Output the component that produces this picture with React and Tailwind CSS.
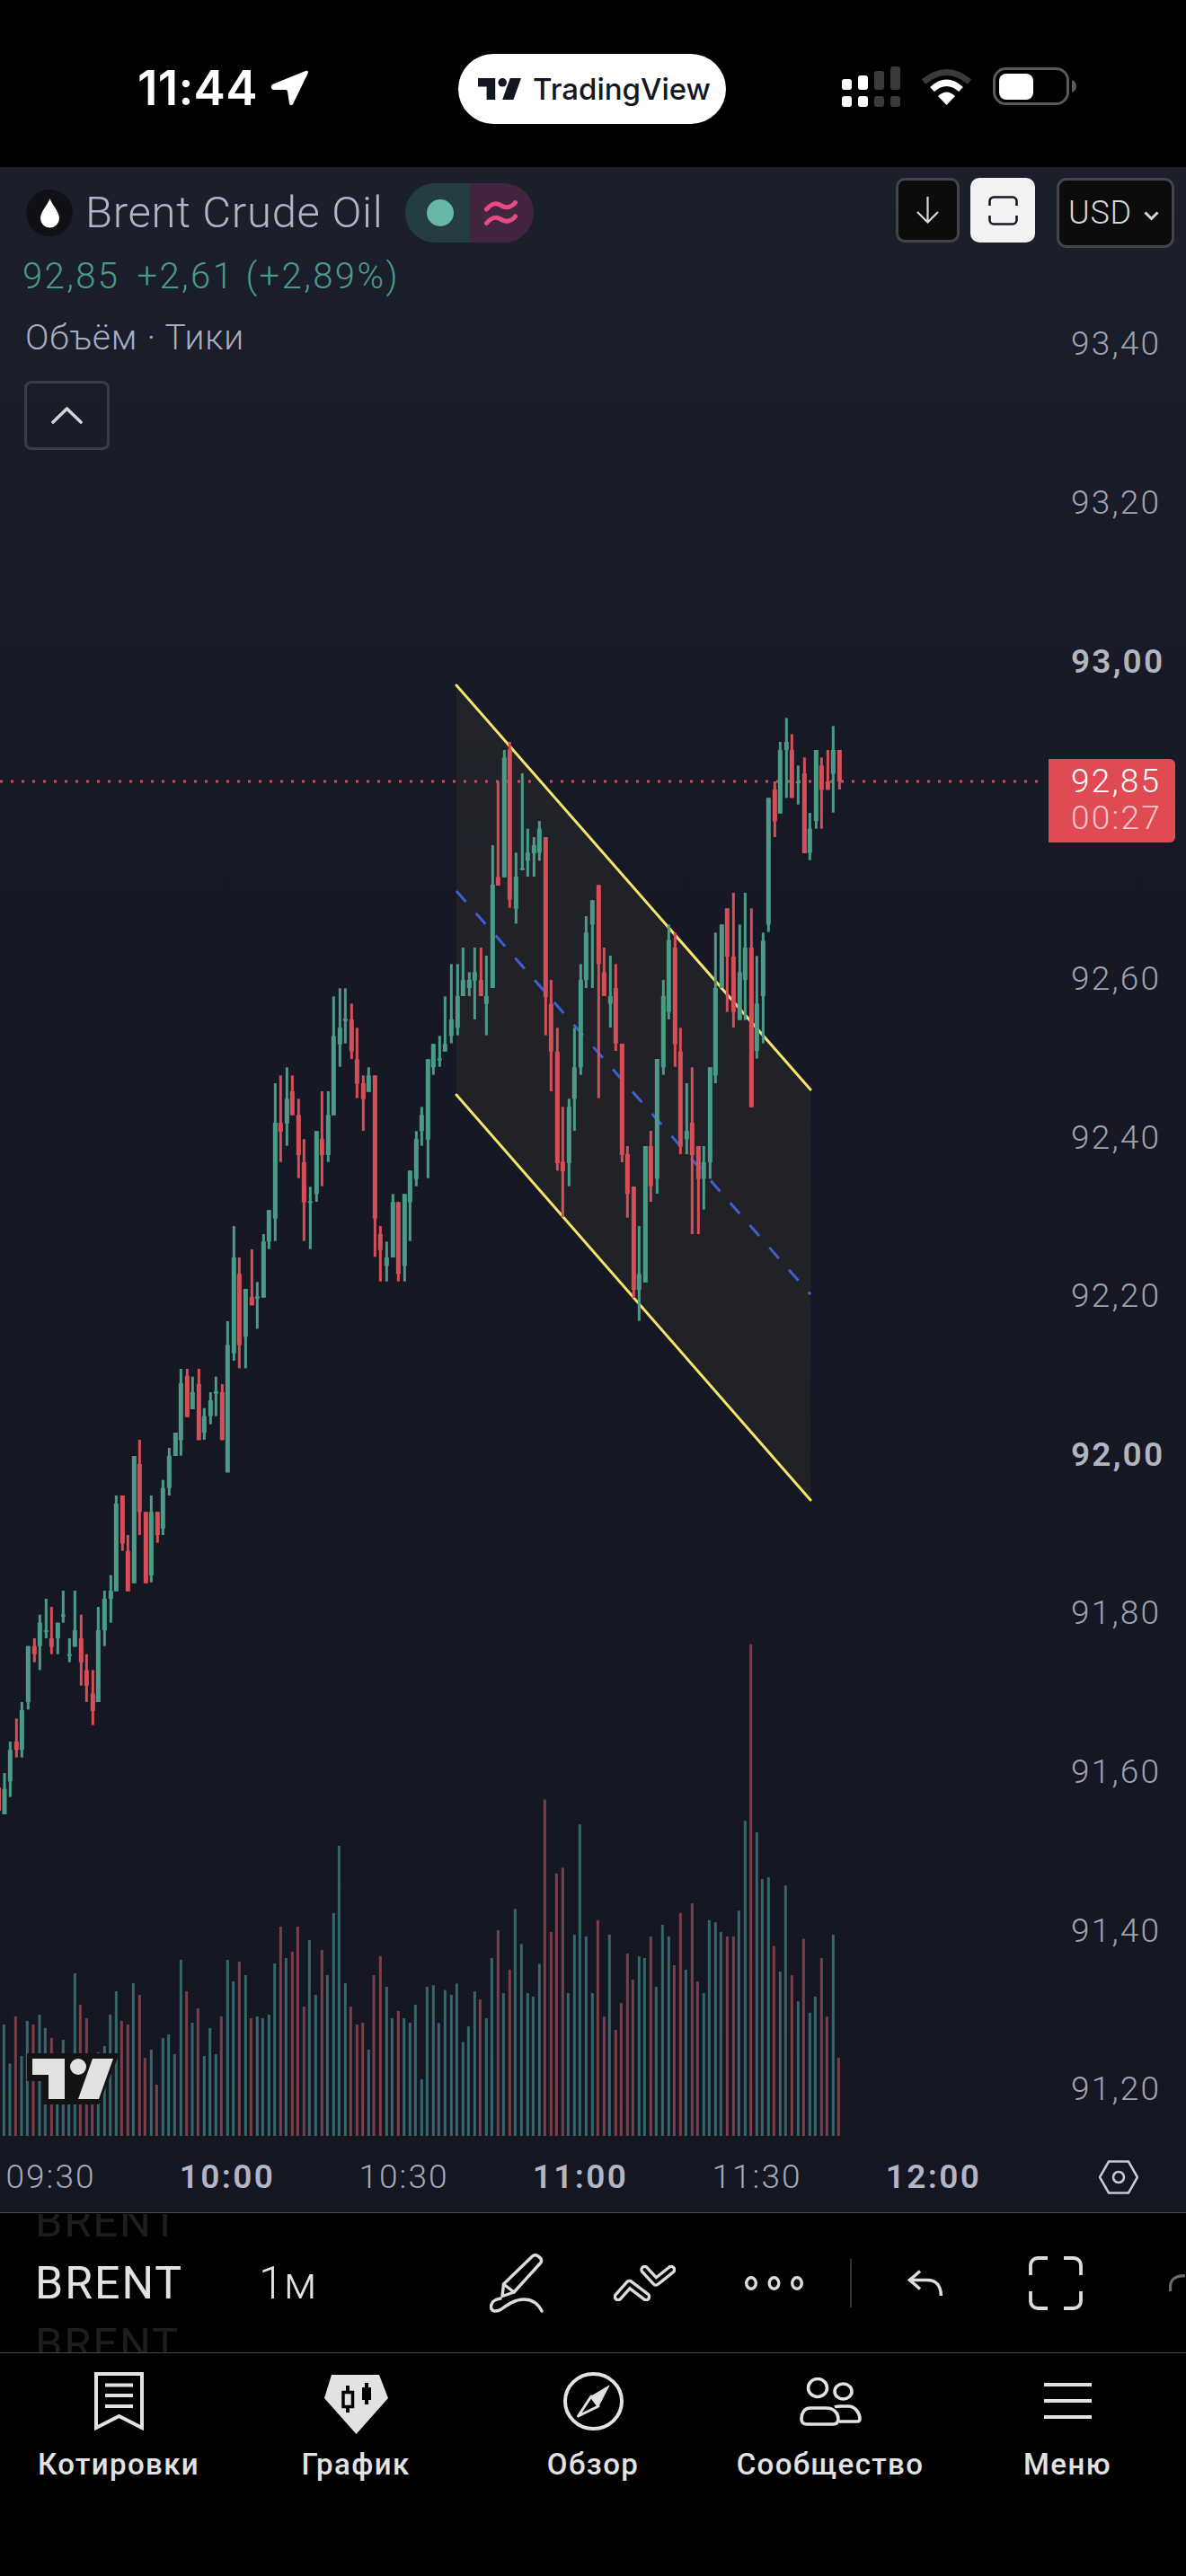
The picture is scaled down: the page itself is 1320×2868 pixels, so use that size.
const G = "#4b9b88";
const R = "#d64e57";
const VG = "#36676a";
const VR = "#7b3f49";

// [u, colour, wickTop, bodyTop, bodyBottom, wickBottom], zoomed reference coordinates
const segA = [
  [15,G,1332,1385,1470,1470],[34,G,1227,1255,1360,1412],[55,R,1150,1227,1255,1280],[73,G,1095,1122,1255,1280],
  [94,G,908,908,1095,1120],[115,R,882,908,935,962],[133,G,803,830,908,988],[154,G,750,855,860,882],
  [172,R,777,882,910,935],[193,G,830,830,882,935],[211,G,723,803,808,830],[232,G,882,935,940,962],
  [250,G,723,855,910,910],[271,R,803,882,962,1040],[289,R,935,988,1040,1095],[310,R,988,1067,1125,1172],
  [328,G,777,855,1095,1095],[349,G,723,750,855,908],[370,G,671,723,750,830],[388,G,405,432,725,725],
  [409,R,405,405,565,590],[427,R,537,590,725,725],[448,G,273,273,698,698],[466,R,219,300,460,537],
  [487,R,460,460,698,698],[505,G,405,460,672,695],[526,R,460,460,537,563],[544,G,353,380,515,537],
  [565,G,246,273,380,405],[586,G,195,195,273,273],[604,G,-18,30,220,272],[625,R,-18,5,143,143],
  [643,G,8,60,117,117],[664,R,-18,33,220,220],[682,G,113,140,195,219],[703,G,60,87,140,167],
  [721,G,8,57,65,140],[742,R,33,60,220,220],[760,G,-177,-98,328,328],
];
const segB = [
  [781,G,945,1050,1370,1395],[799,R,1050,1105,1343,1420],[820,G,1155,1155,1315,1420],[841,R,1023,1183,1210,1210],
  [859,G,1132,1180,1187,1288],[880,G,972,997,1184,1184],[898,G,892,892,997,1022],[919,G,468,600,920,995],
  [937,R,442,600,630,731],[958,G,415,520,603,677],[976,R,442,495,575,575],[997,R,520,574,708,785],
  [1015,R,655,732,866,995],[1036,G,814,862,868,1022],[1057,G,628,628,838,864],[1075,R,495,655,708,812],
  [1096,G,495,574,708,731],[1114,G,178,310,575,575],[1135,G,151,283,338,413],[1153,G,151,252,260,335],
  [1174,R,202,255,362,387],[1192,R,283,388,470,518],[1213,R,442,468,521,627],[1231,G,415,442,497,497],
  [1252,R,442,442,920,1048],[1270,R,945,972,1025,1130],[1291,G,997,1050,1078,1130],[1312,G,838,865,1050,1050],
  [1330,R,865,865,1105,1130],[1351,G,838,838,1078,1130],[1369,G,760,760,865,995],[1390,G,628,655,788,812],
  [1408,G,547,574,628,677],[1429,G,388,388,656,785],[1447,G,337,337,415,440],[1468,G,310,385,392,413],
  [1486,G,178,337,362,362],
];
const segC = [
  [67,G,1000,1185,1240,1265],[88,G,1000,1107,1213,1238],[106,G,945,1053,1107,1107],[127,G,1027,1053,1080,1107],
  [145,G,945,1027,1055,1185],[166,R,945,1053,1107,1107],[184,G,972,1107,1133,1238],[205,G,603,735,1080,1080],
  [223,R,390,710,738,738],[244,G,285,310,710,710],[262,R,258,283,785,812],[283,G,628,708,815,865],
  [304,G,363,680,686,686],[322,G,548,628,655,708],[343,G,576,603,630,708],[361,G,522,548,628,655],
  [382,R,576,576,1110,1238],[400,R,1053,1133,1292,1425],[421,R,1213,1292,1665,1690],[439,R,1477,1660,1692,1845],
  [460,G,1450,1477,1665,1742],[478,G,1213,1345,1450,1557],[499,G,1000,1053,1345,1370],[517,G,840,895,1053,1080],
  [538,G,787,787,868,1080],[559,R,736,736,1000,1448],[577,R,945,1027,1107,1107],[598,G,972,1107,1133,1212],
  [616,R,1000,1080,1265,1290],[637,R,1266,1266,1638,1662],[655,R,1608,1635,1768,1847],[676,R,1743,1743,2088,2115],
  [694,G,1875,2035,2088,2192],[715,G,1608,1608,2063,2063],[733,R,1557,1608,1742,1794],[754,G,1317,1317,1717,1767],
  [775,G,1053,1107,1345,1370],[793,G,868,920,1160,1185],[814,R,895,945,1268,1343],[832,R,1213,1292,1610,1635],
  [853,G,1398,1557,1585,1635],[871,R,1345,1530,1638,1902],[892,R,1608,1608,1718,1902],[910,G,1608,1662,1717,1820],
  [931,G,1345,1345,1662,1717],[949,G,895,1080,1372,1398],[970,G,868,868,1080,1080],[988,R,814,814,975,1160],
  [1009,R,762,975,1160,1212],[1030,G,868,1027,1187,1187],[1048,G,762,945,1053,1187],[1069,R,814,945,1478,1478],
  [1087,G,973,1132,1290,1316],[1108,G,895,922,1107,1265],[1126,G,445,445,868,893],[1147,R,390,417,523,576],
  [1165,G,258,285,497,497],[1186,G,178,258,285,445],[1204,R,232,285,445,445],[1225,G,337,390,395,467],
  [1246,R,310,363,630,630],[1264,G,495,548,628,653],[1285,G,285,285,522,548],[1303,R,310,337,418,548],
  [1324,R,285,390,418,418],[1342,G,205,285,365,494],[1363,R,285,285,390,417],
];
const mk = (seg, x0, y0) =>
  seg.map(([u, c, a, b, d, e]) => ({ x: x0 + u / 3, c, wt: y0 + a / 3, bt: y0 + b / 3, bb: y0 + d / 3, wb: y0 + e / 3 }));
const candles = [
  { x: -1.5, c: R, wt: 1966, bt: 1990, bb: 2016, wb: 2028 },
  ...mk(segA, 0, 1530),
  ...mk(segB, 0, 1050),
  ...mk(segC, 480, 740),
];

const vol1 = [
  [13,762,0],[33,892,0],[52,735,1],[72,867,0],[91,750,0],[111,762,1],[132,729,0],[151,774,0],[172,807,1],[191,867,0],
  [211,813,0],[230,900,0],[250,591,0],[268,696,1],[289,741,1],[308,860,1],[328,855,0],[349,834,0],[368,729,0],[388,651,0],
  [406,750,1],[427,762,1],[445,624,0],[466,663,1],[484,873,1],[505,846,0],[523,963,1],[544,807,0],[563,795,0],[583,861,0],
  [604,546,0],[623,651,1],[642,756,0],[661,708,1],[682,867,0],[701,774,0],[721,861,0],[739,735,1],[760,546,0],[779,618,0],
  [799,552,1],[820,597,0],[838,741,1],[859,735,0],[877,741,0],[898,729,0],[917,558,0],[937,435,1],[955,540,0],[976,519,1],
  [994,435,1],[1015,702,1],[1033,480,0],[1054,663,0],[1075,513,1],[1093,597,0],[1114,390,0],[1132,165,0],[1153,624,0],[1171,702,1],
  [1192,762,1],[1211,756,1],[1231,846,0],[1248,597,1],[1270,534,1],[1291,636,0],[1309,741,0],[1330,717,1],[1349,741,0],[1369,756,0],
  [1387,696,0],[1408,945,0],[1426,636,0],
];
const vol2 = [
  [7,1072,0],[25,1182,0],[46,1086,0],[67,1100,0],[85,1067,0],[106,1237,0],[124,1192,0],[145,1090,0],[163,1113,1],[184,1168,0],
  [202,993,0],[223,912,1],[241,1095,0],[262,1027,1],[280,850,0],[301,952,0],[322,1095,0],[340,1105,0],[361,1010,0],[379,532,1],
  [400,917,1],[418,747,1],[439,730,1],[457,1095,0],[478,925,0],[496,604,0],[517,930,0],[538,1095,0],[556,883,1],[577,1163,1],
  [595,925,0],[616,1202,1],[634,1124,1],[655,980,1],[673,1056,1],[694,988,0],[712,993,0],[733,930,1],[751,1077,0],[772,896,0],
  [793,930,0],[811,1014,1],[832,862,1],[850,1027,0],[871,834,1],[889,1061,1],[910,1095,0],[928,883,0],[949,889,0],[967,917,0],
  [988,930,1],[1009,930,1],[1027,855,0],[1048,594,0],[1067,80,1],[1087,627,0],[1105,763,0],[1126,758,0],[1144,958,1],[1165,1032,0],
  [1183,782,0],[1204,1043,1],[1225,1119,0],[1243,937,1],[1264,1152,0],[1282,1105,0],[1303,993,1],[1321,1163,1],[1342,925,0],[1360,1283,1],
];
const volumes = [
  ...vol1.map(([u, v, r]) => ({ x: u / 3, y: 2000 + v / 3, r })),
  ...vol2.map(([u, v, r]) => ({ x: 480 + u / 3, y: 1800 + v / 2.613, r })),
];

const prices = [
  ["93,40", false],["93,20", false],["93,00", true],["", false],["92,60", false],["92,40", false],
  ["92,20", false],["92,00", true],["91,80", false],["91,60", false],["91,40", false],["91,20", false],
];
const times = [["09:30", false],["10:00", true],["10:30", false],["11:00", true],["11:30", false],["12:00", true]];

function TvLogo({ className, fill }) {
  return (
    <svg viewBox="0 0 90 45" className={className} fill={fill}>
      <path d="M0 0H36V45H18V18H0Z" />
      <circle cx="51" cy="9" r="9" />
      <path d="M90 0L74 45H51L67 0Z" />
    </svg>
  );
}

function Chart() {
  return (
    <svg viewBox="0 186 1320 2198" className="absolute inset-0 w-[1320px] h-[2198px]">
      <polygon points="508,763 902,1213 902,1670 508,1219" fill="rgba(245,230,100,0.048)" />
      <line x1="0" y1="870" x2="1158" y2="870" stroke="#c8505a" strokeWidth="3" strokeDasharray="3 9" />
      <line x1="508" y1="763" x2="902" y2="1213" stroke="#f4e56a" strokeWidth="3" strokeLinecap="round" />
      <line x1="508" y1="1219" x2="902" y2="1670" stroke="#f4e56a" strokeWidth="3" strokeLinecap="round" />
      <line x1="508" y1="992" x2="902" y2="1441" stroke="#3f5fd2" strokeWidth="3" strokeDasharray="16 17" />
      {volumes.map((v, i) => (
        <rect key={i} x={v.x - 1.5} y={v.y} width="3" height={2378 - v.y} fill={v.r ? VR : VG} />
      ))}
      {candles.map((c, i) => (
        <g key={i} fill={c.c}>
          <rect x={c.x - 1.5} y={c.wt} width="3" height={c.wb - c.wt} />
          <rect x={c.x - 2.5} y={c.bt} width="5" height={Math.max(c.bb - c.bt, 2)} />
        </g>
      ))}
      <path d="M30 2286H133L110 2343H48V2317H30Z" fill="#131313" />
      <g fill="#e2e2e2">
        <path d="M36 2292H72V2337H54V2310H36Z" />
        <circle cx="87" cy="2301" r="9" />
        <path d="M126 2292L110 2337H87L103 2292Z" />
      </g>
    </svg>
  );
}

function StatusBar() {
  return (
    <div className="h-[186px] bg-black flex items-start shrink-0">
      <span className="ml-[153px] mt-[67px] w-[136px] text-[53px] leading-[62px] font-semibold text-white font-[Inter,sans-serif] tracking-[0.3px]">
        11:44
      </span>
      <svg viewBox="0 0 42 40" className="ml-[12px] mt-[78px] w-[42px] h-[40px]" fill="#fff">
        <path d="M2 16L39 1Q43 0 41.500 4L25 38Q22 41 21 37L19 24Q19 22 17 22L3 22Q-1 20 2 16Z" />
      </svg>
      <div className="ml-[167px] mt-[60px] w-[298px] h-[78px] rounded-full bg-white flex items-center">
        <TvLogo className="ml-[22px] w-[48px] h-[24px]" fill="#131722" />
        <span className="ml-[13px] text-[33px] leading-[44px] font-medium text-[#131722] font-[Inter,sans-serif]">
          TradingView
        </span>
      </div>
      <svg viewBox="0 0 65 45" className="ml-[129px] mt-[74px] w-[65px] h-[45px]">
        <g fill="#fff">
          <rect x="0" y="14" width="11" height="12" rx="3" />
          <rect x="18" y="10" width="11" height="16" rx="3" />
          <rect x="0" y="33" width="11" height="12" rx="3" />
          <rect x="18" y="33" width="11" height="12" rx="3" />
        </g>
        <g fill="#3a3a3a">
          <rect x="36" y="5" width="11" height="21" rx="3" />
          <rect x="54" y="0" width="11" height="26" rx="3" />
          <rect x="36" y="33" width="11" height="12" rx="3" />
          <rect x="54" y="33" width="11" height="12" rx="3" />
        </g>
      </svg>
      <svg viewBox="0 0 57 41" className="ml-[23px] mt-[76px] w-[57px] h-[41px]" fill="none">
        <path d="M3 15Q28.500 -6 54 15" stroke="#3a3a3a" strokeWidth="7" />
        <path d="M12.500 23.500Q28.500 9 44.500 23.500" stroke="#fff" strokeWidth="7" />
        <path d="M19 31Q28.500 22 38 31L28.500 41Z" fill="#fff" />
      </svg>
      <svg viewBox="0 0 93 42" className="ml-[23px] mt-[75px] w-[93px] h-[42px]" fill="none">
        <rect x="1.500" y="1.500" width="82" height="39" rx="13" stroke="#5a5a5a" strokeWidth="3" />
        <rect x="7" y="7" width="38" height="29" rx="8" fill="#fff" />
        <path d="M88 14Q93 16 93 21Q93 26 88 28Z" fill="#5a5a5a" />
      </svg>
    </div>
  );
}

function Header() {
  return (
    <div className="relative flex flex-col">
      <div className="flex items-start justify-between pt-[12px]">
        <div className="flex items-center ml-[29px] mt-[6px]">
          <div className="w-[52px] h-[52px] rounded-full bg-[#101114] flex items-center justify-center">
            <svg viewBox="0 0 21 33" className="w-[21px] h-[33px]" fill="#fff">
              <path d="M10.500 0C13 7 21 15 21 22A10.500 10.500 0 0 1 0 22C0 15 8 7 10.500 0Z" />
            </svg>
          </div>
          <span className="ml-[14px] w-[329px] whitespace-nowrap text-[49px] leading-[66px] text-[#b2b5c6] font-light tracking-[0.7px]">Brent Crude Oil</span>
          <div className="ml-[27px] flex h-[66px] w-[143px] rounded-full overflow-hidden">
            <div className="w-[72px] bg-[#243d40] flex items-center justify-center pl-[5px]">
              <div className="w-[30px] h-[30px] rounded-full bg-[#67b8a6]" />
            </div>
            <div className="w-[71px] bg-[#42263f] flex items-center justify-center pr-[2px]">
              <svg viewBox="0 0 37 28" className="w-[37px] h-[28px]" fill="none" stroke="#e84b80" strokeWidth="5" strokeLinecap="round">
                <path d="M2.500 10C9 2 15 3 19 6C24 9 30 8 34.500 2.500" />
                <path d="M2.500 25.500C9 17.500 15 18.500 19 21.500C24 24.500 30 23.500 34.500 18" />
              </svg>
            </div>
          </div>
        </div>
        <div className="flex items-start mr-[13px]">
          <div className="w-[71px] h-[72px] rounded-[10px] border-[3px] border-[#434549] bg-[#0c0c0d] flex items-center justify-center">
            <svg viewBox="0 0 25 30" className="w-[25px] h-[30px]" fill="none" stroke="#d8d8d8" strokeWidth="2.200">
              <path d="M12.500 0V28M1 17L12.500 28.500L24 17" />
            </svg>
          </div>
          <div className="ml-[12px] w-[72px] h-[72px] rounded-[10px] bg-[#f2f2f3] flex items-center justify-center">
            <svg viewBox="0 0 33 33" className="w-[33px] h-[33px]" fill="none" stroke="#131722" strokeWidth="2.600">
              <path d="M1.500 11V6A4.500 4.500 0 0 1 6 1.500H27A4.500 4.500 0 0 1 31.500 6V11" />
              <path d="M1.500 22V27A4.500 4.500 0 0 0 6 31.500H27A4.500 4.500 0 0 0 31.500 27V22" />
            </svg>
          </div>
          <div className="ml-[24px] w-[131px] h-[78px] rounded-[11px] border-[3px] border-[#434549] bg-[#0c0c0d] flex items-center pl-[10px]">
            <span className="text-[36px] leading-[44px] text-[#d5d5d8] font-light tracking-[0.8px]">USD</span>
            <svg viewBox="0 0 17 11" className="ml-[13px] mt-[6px] w-[17px] h-[11px]" fill="none" stroke="#d5d5d8" strokeWidth="3">
              <path d="M1.500 1.500L8.500 8.500L15.500 1.500" />
            </svg>
          </div>
        </div>
      </div>
      <div className="ml-[25px] mt-[8px] h-[48px] text-[40px] leading-[48px] text-[#4b9a88] font-light tracking-[2.4px]">
        92,85<span className="ml-[19px]">+2,61</span> (+2,89%)
      </div>
      <div className="ml-[28px] mt-[20px] h-[48px] text-[39px] leading-[48px] text-[#a9acbc] font-light tracking-[0.8px]">Объём · Тики</div>
      <div className="ml-[27px] mt-[24px] w-[95px] h-[77px] rounded-[8px] border-[3px] border-[#3a3c45] flex items-center justify-center">
        <svg viewBox="0 0 35 19" className="w-[35px] h-[19px]" fill="none" stroke="#d4d4d6" strokeWidth="3.600" strokeLinecap="round" strokeLinejoin="round">
          <path d="M2 17L17.500 2L33 17" />
        </svg>
      </div>
    </div>
  );
}

function PriceAxis() {
  return (
    <div className="absolute left-[1192px] top-[109px] flex flex-col">
      {prices.map(([p, b], i) => (
        <div key={i} className="h-[176.65px] flex items-center">
          <span className={b ? "text-[37px] leading-[44px] font-semibold text-[#b2b5c0] tracking-[2.2px]" : "text-[37px] leading-[44px] font-light text-[#9fa2b1] tracking-[2.2px]"}>
            {p}
          </span>
        </div>
      ))}
    </div>
  );
}

function PriceTag() {
  return (
    <div className="absolute left-[1167px] top-[659px] w-[141px] h-[93px] rounded-r-[6px] bg-[#e04a53] flex flex-col items-start justify-center pl-[25px] pb-[4px] text-[37px] leading-[41px] font-light tracking-[2.2px]">
      <span className="text-white">92,85</span>
      <span className="text-[#f7c6c9]">00:27</span>
    </div>
  );
}

function TimeAxis() {
  return (
    <div className="h-[79px] flex items-center shrink-0">
      <div className="flex ml-[-41.75px]">
        {times.map(([t, b]) => (
          <span
            key={t}
            className={b ? "w-[196.5px] text-center text-[37px] leading-[44px] font-semibold text-[#b2b5c5] tracking-[2.4px]" : "w-[196.5px] text-center text-[37px] leading-[44px] font-light text-[#a6a9b8] tracking-[2px]"}
          >
            {t}
          </span>
        ))}
      </div>
      <svg viewBox="0 0 44 38" className="ml-[85.5px] w-[44px] h-[38px]" fill="none" stroke="#c8c9d2" strokeWidth="2.600">
        <path d="M11 1.500H33L43 19L33 36.500H11L1 19Z" />
        <circle cx="22" cy="19" r="6" />
      </svg>
    </div>
  );
}

function Toolbar() {
  return (
    <div className="h-[157px] border-t-[1.5px] border-b-[1.5px] border-[#4a4a4a] bg-black flex items-center shrink-0 overflow-hidden">
      <div className="ml-[39px] w-[172px] h-[154px] flex flex-col items-start justify-center overflow-hidden">
        <span className="shrink-0 text-[49px] leading-[68px] text-[#1d1d1e] tracking-[1.8px]">BRENT</span>
        <span className="shrink-0 text-[50px] leading-[68px] text-[#e2e2e2] tracking-[2px]">BRENT</span>
        <span className="shrink-0 text-[49px] leading-[68px] text-[#1d1d1e] tracking-[1.8px]">BRENT</span>
      </div>
      <span className="ml-[77px] w-[58px] text-[50px] leading-[60px] text-[#e2e2e2] font-light">1м</span>
      <svg viewBox="0 0 60 66" className="ml-[199px] w-[60px] h-[66px] shrink-0" fill="none" stroke="#dcdcdc" strokeWidth="3.400" strokeLinejoin="round" strokeLinecap="round">
        <path d="M47 3.500Q50 0.500 54 3Q59 6 57 10L27 43L14 47.500L15.500 34Z" />
        <path d="M15.500 34L27 43" />
        <path d="M12 50C5 51 1 55 1.500 60C2 65 8 65 13 62C20 57 28 51 38 51C47 51 54 56 58 64" />
      </svg>
      <svg viewBox="0 0 69 40" className="ml-[78px] w-[69px] h-[40px] shrink-0" fill="none" strokeLinecap="round" strokeLinejoin="round">
        <path d="M5 35L17.500 21L36 35M34.500 5L47 18.500L64 5" stroke="#dcdcdc" strokeWidth="10.500" />
        <path d="M5 35L17.500 21L36 35M34.500 5L47 18.500L64 5" stroke="#000" strokeWidth="3.800" />
      </svg>
      <svg viewBox="0 0 65 16" className="ml-[77px] w-[65px] h-[16px] shrink-0" fill="none" stroke="#dcdcdc" strokeWidth="3.400">
        <ellipse cx="7" cy="8" rx="5.300" ry="6.300" />
        <ellipse cx="32.500" cy="8" rx="5.300" ry="6.300" />
        <ellipse cx="58" cy="8" rx="5.300" ry="6.300" />
      </svg>
      <div className="ml-[52px] w-[1.5px] h-[54px] bg-[#303030] shrink-0" />
      <svg viewBox="0 0 39 29" className="ml-[62px] w-[39px] h-[29px] shrink-0" fill="none" stroke="#dcdcdc" strokeWidth="3.500">
        <path d="M14 1.500L2.500 11.500L14 21.500" />
        <path d="M3 11.500H22C32 11.500 37.300 18 37.300 29" />
      </svg>
      <svg viewBox="0 0 60 60" className="ml-[96px] w-[60px] h-[60px] shrink-0" fill="none" stroke="#dcdcdc" strokeWidth="3.800">
        <path d="M2 21V10A8 8 0 0 1 10 2H21" />
        <path d="M39 2H50A8 8 0 0 1 58 10V21" />
        <path d="M2 39V50A8 8 0 0 0 10 58H21" />
        <path d="M39 58H50A8 8 0 0 0 58 50V39" />
      </svg>
      <svg viewBox="0 0 18 19" className="ml-[96px] w-[18px] h-[19px] shrink-0" fill="none" stroke="#6a6a6a" strokeWidth="3.200">
        <path d="M1.600 19V13C1.600 6 7 1.600 18 1.600" />
      </svg>
    </div>
  );
}

const navLabel = "h-[48px] text-[33px] leading-[48px] font-medium text-[#e2e2e2] tracking-[1.4px]";

function BottomNav() {
  return (
    <div className="flex-1 bg-black grid grid-cols-5">
      <div className="flex flex-col items-center">
        <div className="h-[100px] pt-[21px]">
          <svg viewBox="0 0 55 65" className="w-[55px] h-[65px]" fill="none" stroke="#e2e2e2" strokeWidth="4">
            <path d="M2 2H53V62L27.500 49L2 62Z" />
            <path d="M12 14.500H43M12 26H43M12 38H43" />
          </svg>
        </div>
        <span className={navLabel}>Котировки</span>
      </div>
      <div className="flex flex-col items-center">
        <div className="h-[100px] pt-[24px]">
          <svg viewBox="0 0 71 66" className="w-[71px] h-[66px]">
            <path d="M8 0H61L71 26L35.500 66L0 26Z" fill="#e2e2e2" />
            <path d="M26 12V42M47 9V33" stroke="#000" strokeWidth="4" />
            <rect x="21" y="19.500" width="10.500" height="16" fill="#e2e2e2" stroke="#000" strokeWidth="3.500" />
            <rect x="42" y="14" width="10" height="14" fill="#000" />
          </svg>
        </div>
        <span className={navLabel}>График</span>
      </div>
      <div className="flex flex-col items-center">
        <div className="h-[100px] pt-[21px]">
          <svg viewBox="0 0 67 65" className="w-[67px] h-[65px]" fill="none" stroke="#e2e2e2">
            <ellipse cx="33.500" cy="32.500" rx="31.500" ry="30.500" strokeWidth="4" />
            <path d="M51 15L31 27L39 38Z" fill="#e2e2e2" strokeWidth="1" />
            <path d="M31 27L16.500 49L39 38Z" strokeWidth="3" strokeLinejoin="round" />
          </svg>
        </div>
        <span className={navLabel}>Обзор</span>
      </div>
      <div className="flex flex-col items-center">
        <div className="h-[100px] pt-[27px]">
          <svg viewBox="0 0 69 54" className="w-[69px] h-[54px]" fill="none" stroke="#e2e2e2" strokeWidth="3.600">
            <ellipse cx="20" cy="11.500" rx="10.500" ry="10" />
            <ellipse cx="48.500" cy="15.500" rx="9.500" ry="8.500" />
            <path d="M12 34H30C38 34 43 40 43 46C43 50 41 52 37 52H8C4 52 2 50 2 46C2 40 5 34 12 34Z" />
            <path d="M39 33C41 32 43 32 47 32H54C62 32 67 40 67 46C67 48 66 49 64 49H44" />
          </svg>
        </div>
        <span className={navLabel}>Сообщество</span>
      </div>
      <div className="flex flex-col items-center">
        <div className="h-[100px] pt-[33px] flex flex-col gap-[14px] items-center">
          <div className="w-[53px] h-[4px] bg-[#e2e2e2]" />
          <div className="w-[53px] h-[4px] bg-[#e2e2e2]" />
          <div className="w-[53px] h-[4px] bg-[#e2e2e2]" />
        </div>
        <span className={navLabel}>Меню</span>
      </div>
    </div>
  );
}

export default function App() {
  return (
    <div className="w-[1320px] h-[2868px] bg-black flex flex-col overflow-hidden font-[Roboto,sans-serif]">
      <StatusBar />
      <div className="flex flex-col shrink-0 bg-linear-to-b from-[#1b1e2b] via-[#161925] via-[35%] to-[#141722]">
        <div className="relative h-[2198px] shrink-0">
          <Chart />
          <Header />
          <PriceAxis />
          <PriceTag />
        </div>
        <TimeAxis />
      </div>
      <Toolbar />
      <BottomNav />
    </div>
  );
}
